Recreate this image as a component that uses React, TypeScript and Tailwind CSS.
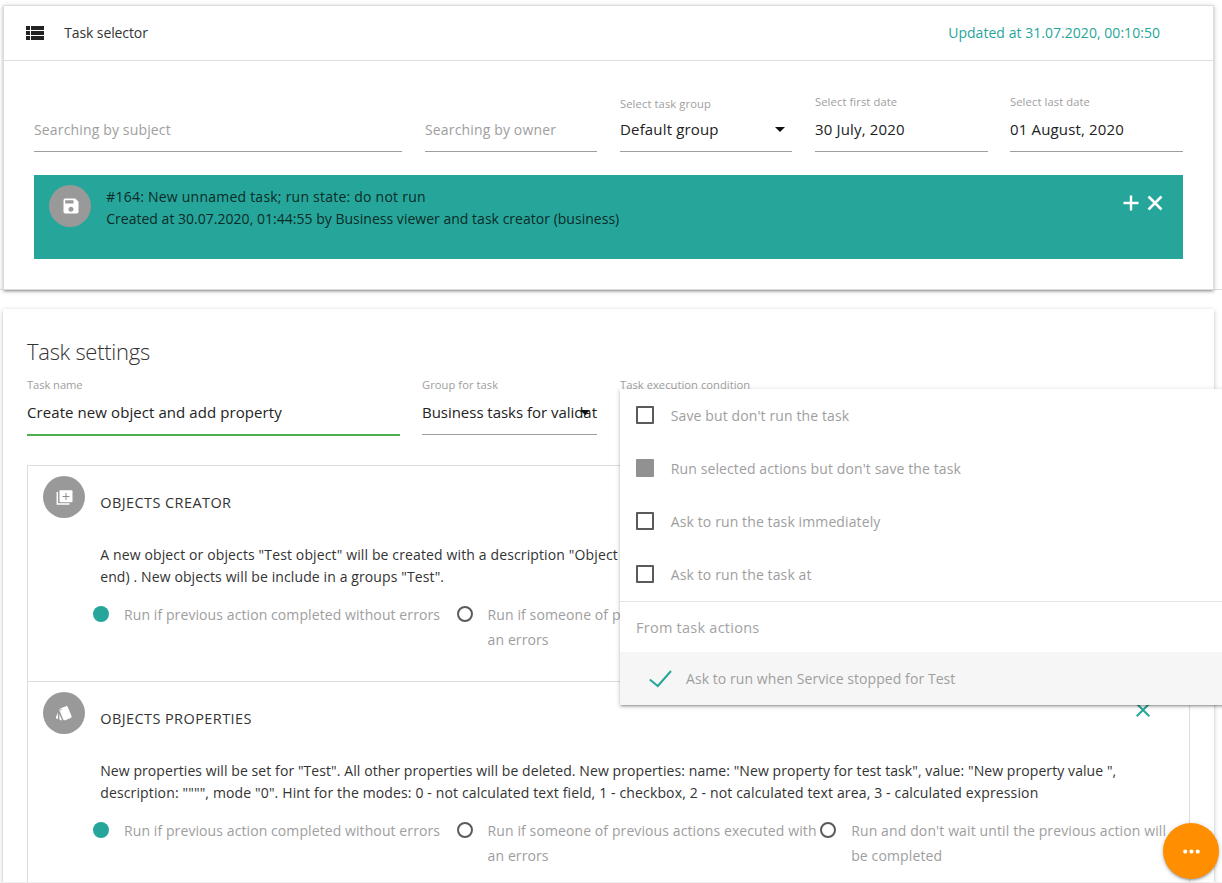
import type { ReactNode } from "react";
import { MdViewList, MdSave, MdStyle, MdMoreHoriz, MdClose } from "react-icons/md";

const depth =
  "shadow-[0_2px_2px_0_rgba(0,0,0,0.14),0_3px_1px_-2px_rgba(0,0,0,0.12),0_1px_5px_0_rgba(0,0,0,0.2)]";

function Caret() {
  return (
    <svg width="10" height="5" viewBox="0 0 10 5" className="absolute right-[7px] top-[17px]">
      <path d="M0 0h10L5 5z" fill="#111" />
    </svg>
  );
}

function PagesAddIcon() {
  return (
    <svg width="17" height="15" viewBox="0 0 17 15" fill="none">
      <path d="M1.300 2v11.900H13.500" stroke="white" strokeWidth="1.500" />
      <rect x="3.500" y=".3" width="13" height="12" rx="1" fill="white" />
      <path d="M10 3v7M6.500 6.500h7" stroke="#8c8c8c" strokeWidth="1" />
    </svg>
  );
}

type FieldProps = {
  label?: string;
  labelClass?: string;
  value: string;
  valueClass?: string;
  width: string;
  caret?: boolean;
};

function Field({ label, labelClass = "", value, valueClass = "text-[15px] tracking-[0.16px] text-[#222]", width, caret }: FieldProps) {
  return (
    <div className={`flex shrink-0 flex-col whitespace-nowrap ${width}`}>
      <div className={`h-4 text-[11.2px] leading-4 tracking-[0.1px] text-[#9e9e9e] ${labelClass}`}>{label}</div>
      <div className="relative mt-[-2px] h-[42px] overflow-hidden border-b border-[#9e9e9e]">
        <div className={`leading-[39px] ${valueClass}`}>{value}</div>
        {caret && <Caret />}
      </div>
    </div>
  );
}

function Circle({ children }: { children: ReactNode }) {
  return (
    <div className="flex size-[42px] shrink-0 items-center justify-center rounded-full bg-[#999] text-white">
      {children}
    </div>
  );
}

function Radio({ on, first, second, track }: { on?: boolean; first: string; second?: string; track: string }) {
  return (
    <div className="flex w-[363.6px] shrink-0 whitespace-nowrap text-[14px] leading-[25px] text-[#9e9e9e]">
      <span
        className={`mt-[4px] size-4 shrink-0 rounded-full ${on ? "bg-[#26a69a]" : "border-2 border-[#5a5a5a]"}`}
      />
      <span className={`ml-[15px] ${track}`}>
        {first}
        {second && <br />}
        {second}
      </span>
    </div>
  );
}

type ActionProps = { icon: ReactNode; title: string; lines: { text: string; track: string }[] };

function Action({ icon, title, lines }: ActionProps) {
  return (
    <div className="relative flex h-[216px] shrink-0 border-b border-[#ddd] pl-[15px] pt-[10px]">
      <Circle>{icon}</Circle>
      <div className="ml-[15.2px] min-w-0 whitespace-nowrap text-[14px] leading-[22px] text-[#333]">
        <div className="mt-[16px] text-[14.5px] tracking-[0.42px]">{title}</div>
        <div className="mt-[30px]">
          {lines.map((l) => (
            <div key={l.text} className={l.track}>
              {l.text}
            </div>
          ))}
        </div>
        <div className="-ml-[7.2px] mt-[14px] flex">
          <Radio on first="Run if previous action completed without errors" track="tracking-[0.09px]" />
          <Radio first="Run if someone of previous actions executed with" second="an errors" track="tracking-[0.1px]" />
          <Radio first="Run and don't wait until the previous action will" second="be completed" track="tracking-[0.12px]" />
        </div>
      </div>
      <MdClose size={24} className="absolute right-[34px] top-[16px] text-[#26a69a]" />
    </div>
  );
}

function Option({ label, checked }: { label: string; checked?: boolean }) {
  return (
    <div className="flex h-[53px] items-center pl-4 text-[14px] text-[#9e9e9e]">
      <span className={`mb-[2px] size-[18px] rounded-[1px] ${checked ? "bg-[#919191]" : "border-2 border-[#5a5a5a]"}`} />
      <span className="ml-[16.800px] tracking-[0.11px]">{label}</span>
    </div>
  );
}

export default function App() {
  return (
    <div className="relative flex h-[883px] w-[1222px] flex-col overflow-hidden bg-white font-['Open_Sans','Noto_Sans',sans-serif]">
      <div className="h-[290px] shrink-0 border-b border-[#ddd] pl-[3px] pt-[5px]">
        <section className={`h-[285px] w-[1211px] border border-[#ddd] ${depth}`}>
          <header className="flex h-[55px] items-center border-b border-[#ddd] text-[14px]">
            <MdViewList size={24} className="ml-[19px] text-[#222]" />
            <span className="mb-[2px] ml-[17.2px] tracking-[-0.1px] text-[#333]">Task selector</span>
            <span className="mb-[2px] ml-auto mr-[53px] tracking-[0.04px] text-[#26a69a]">Updated at 31.07.2020, 00:10:50</span>
          </header>
          <div className="ml-[30px] mt-[35px] flex">
            <Field value="Searching by subject" valueClass="text-[14px] tracking-[0.15px] text-[#9e9e9e]" width="w-[368px]" />
            <Field value="Searching by owner" valueClass="text-[14px] tracking-[0.15px] text-[#9e9e9e]" width="ml-[23px] w-[172px]" />
            <Field label="Select task group" value="Default group" width="ml-[23px] w-[172px]" caret />
            <Field label="Select first date" labelClass="relative -top-0.5" value="30 July, 2020" width="ml-[23px] w-[173px]" />
            <Field label="Select last date" labelClass="relative -top-0.5" value="01 August, 2020" width="ml-[22px] w-[173px]" />
          </div>
          <div className="ml-[30px] mt-[23px] flex h-[84px] w-[1149px] bg-[#26a69a] pl-[15px] pt-[10px]">
            <Circle>
              <MdSave size={20} className="ml-px" />
            </Circle>
            <div className="ml-[15.2px] mt-[1px] whitespace-nowrap text-[14px] leading-[22px] text-[#0b2b28]">
              <div className="tracking-[0.23px]">#164: New unnamed task; run state: do not run</div>
              <div className="tracking-[0.02px]">Created at 30.07.2020, 01:44:55 by Business viewer and task creator (business)</div>
            </div>
            <div className="ml-auto mr-[20px] mt-[10px] flex gap-[8px]">
              <svg width="16" height="16" viewBox="0 0 16 16" stroke="white" strokeWidth="2.4">
                <path d="M8 .5v15M.5 8h15" />
              </svg>
              <svg width="16" height="16" viewBox="0 0 16 16" stroke="white" strokeWidth="2.5">
                <path d="M1.500 1.500l13 13M14.500 1.500l-13 13" />
              </svg>
            </div>
          </div>
        </section>
      </div>

      <section className={`ml-[3px] mt-[19px] flex h-[640px] w-[1211px] shrink-0 flex-col rounded-[2px] pl-6 ${depth}`}>
        <h1 className="mt-[26px] h-[32px] text-[22px] font-light leading-[32px] tracking-[-0.28px] text-[#333]">Task settings</h1>
        <div className="mt-[10px] flex">
          <div className="flex w-[373px] shrink-0 flex-col whitespace-nowrap">
            <div className="h-4 text-[11.2px] leading-4 tracking-[-0.08px] text-[#9e9e9e]">Task name</div>
            <div className="h-[43px] border-b-2 border-[#4caf50] text-[15px] leading-[39px] tracking-[0.08px] text-[#222]">
              Create new object and add property
            </div>
          </div>
          <div className="ml-[22px] flex w-[175px] shrink-0 flex-col whitespace-nowrap">
            <div className="h-4 text-[11.2px] leading-4 tracking-[0.05px] text-[#9e9e9e]">Group for task</div>
            <div className="relative h-[42px] border-b border-[#9e9e9e] text-[15px] leading-[39px] tracking-[-0.03px] text-[#222]">
              Business tasks for validat
              <Caret />
            </div>
          </div>
          <div className="ml-[23px] h-4 text-[11.2px] leading-4 tracking-[0.03px] text-[#9e9e9e]">Task execution condition</div>
        </div>
        <div className="mt-[29px] flex w-[1163px] flex-col border border-[#ddd]">
          <Action
            icon={<PagesAddIcon />}
            title="OBJECTS CREATOR"
            lines={[
              { text: 'A new object or objects "Test object" will be created with a description "Object', track: "tracking-[0.13px]" },
              { text: 'end) . New objects will be include in a groups "Test".', track: "tracking-[0.11px]" },
            ]}
          />
          <Action
            icon={<MdStyle size={18} />}
            title="OBJECTS PROPERTIES"
            lines={[
              { text: 'New properties will be set for "Test". All other properties will be deleted. New properties: name: "New property for test task", value: "New property value ",', track: "tracking-[0.08px]" },
              { text: 'description: """", mode "0". Hint for the modes: 0 - not calculated text field, 1 - checkbox, 2 - not calculated text area, 3 - calculated expression', track: "tracking-[0.14px]" },
            ]}
          />
        </div>
      </section>

      <div className={`absolute left-[620px] top-[389px] h-[316px] w-[640px] bg-white ${depth}`}>
        <Option label="Save but don't run the task" />
        <Option label="Run selected actions but don't save the task" checked />
        <Option label="Ask to run the task immediately" />
        <Option label="Ask to run the task at" />
        <div className="flex h-[51px] items-center border-t border-[#e4e4e4] pl-4 pt-[2px] text-[14.5px] tracking-[0.25px] text-[#a3a3a3]">
          <span>From task actions</span>
        </div>
        <div className="flex h-[53px] items-center bg-[#f6f6f6] pl-[29px] text-[14px] text-[#9e9e9e]">
          <svg width="23" height="18" viewBox="0 0 23 18" fill="none" stroke="#26a69a" strokeWidth="2">
            <path d="M.8 9.500L8.800 16L22 1" />
          </svg>
          <span className="ml-[14px] tracking-[0.07px]">Ask to run when Service stopped for Test</span>
        </div>
      </div>

      <div className="absolute left-0 top-[882px] h-px w-full bg-[#eee]" />
      <div className={`absolute left-[1163px] top-[823px] flex size-14 items-center justify-center rounded-full bg-[#ff8f00] text-white ${depth}`}>
        <MdMoreHoriz size={25} />
      </div>
    </div>
  );
}
